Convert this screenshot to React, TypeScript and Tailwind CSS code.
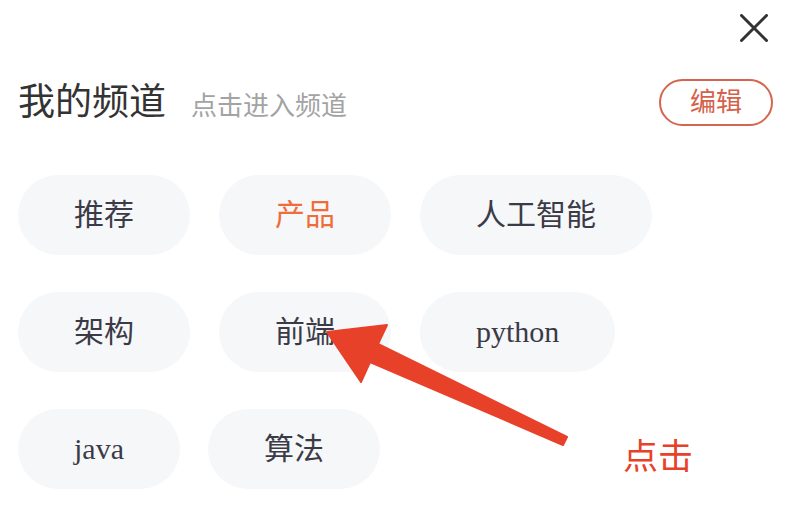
import React from "react";

const serif = { fontFamily: '"Liberation Serif", "Noto Sans CJK SC", serif' };

function Chip({ label, active = false }: { label: string; active?: boolean }) {
  return (
    <div
      className={`h-[80px] px-[56px] rounded-full bg-[#f6f7f9] flex items-center justify-center text-[30px] leading-none ${
        active ? "text-[#ee6d3b]" : "text-[#3b3b48]"
      }`}
      style={serif}
    >
      {label}
    </div>
  );
}

export default function App() {
  return (
    <div className="relative w-[792px] h-[528px] bg-white overflow-hidden" style={serif}>
      <div className="flex justify-end pt-[14px] pr-[24px]">
        <svg width="28" height="28" viewBox="0 0 28 28">
          <path d="M1.5 1.5 L26.5 26.5 M26.5 1.5 L1.5 26.5" stroke="#333" strokeWidth="3" strokeLinecap="round" />
        </svg>
      </div>
      <div className="mt-[37px] px-[18px] flex items-center justify-between">
        <div className="flex items-end gap-[25px]">
          <span className="text-[37px] leading-none text-[#333]">我的频道</span>
          <span className="text-[26px] leading-none text-[#a3a3a3] mb-[1px]">点击进入频道</span>
        </div>
        <div className="w-[114px] h-[47px] mr-[1px] rounded-full border-2 border-[#d6654f] flex items-center justify-center text-[26px] text-[#d4624b] leading-none">
          编辑
        </div>
      </div>
      <div className="mt-[49px] px-[18px] flex flex-col gap-[37px]">
        <div className="flex gap-[29px]">
          <Chip label="推荐" />
          <Chip label="产品" active />
          <Chip label="人工智能" />
        </div>
        <div className="flex gap-[29px]">
          <Chip label="架构" />
          <Chip label="前端" />
          <Chip label="python" />
        </div>
        <div className="flex gap-[28px]">
          <Chip label="java" />
          <Chip label="算法" />
        </div>
      </div>
      <svg className="absolute left-0 top-0" width="792" height="528" viewBox="0 0 792 528">
        <polygon
          points="327,332 387,325 378,344 567,437 563,445 370,362 361,382"
          fill="#e8412a"
          stroke="#e8412a"
          strokeWidth="2"
          strokeLinejoin="round"
        />
      </svg>
      <div
        className="absolute left-[623px] top-[436px] text-[35px] leading-none text-[#e8412a]"
        style={{ fontFamily: '"Noto Sans CJK SC", sans-serif' }}
      >
        点击
      </div>
    </div>
  );
}
